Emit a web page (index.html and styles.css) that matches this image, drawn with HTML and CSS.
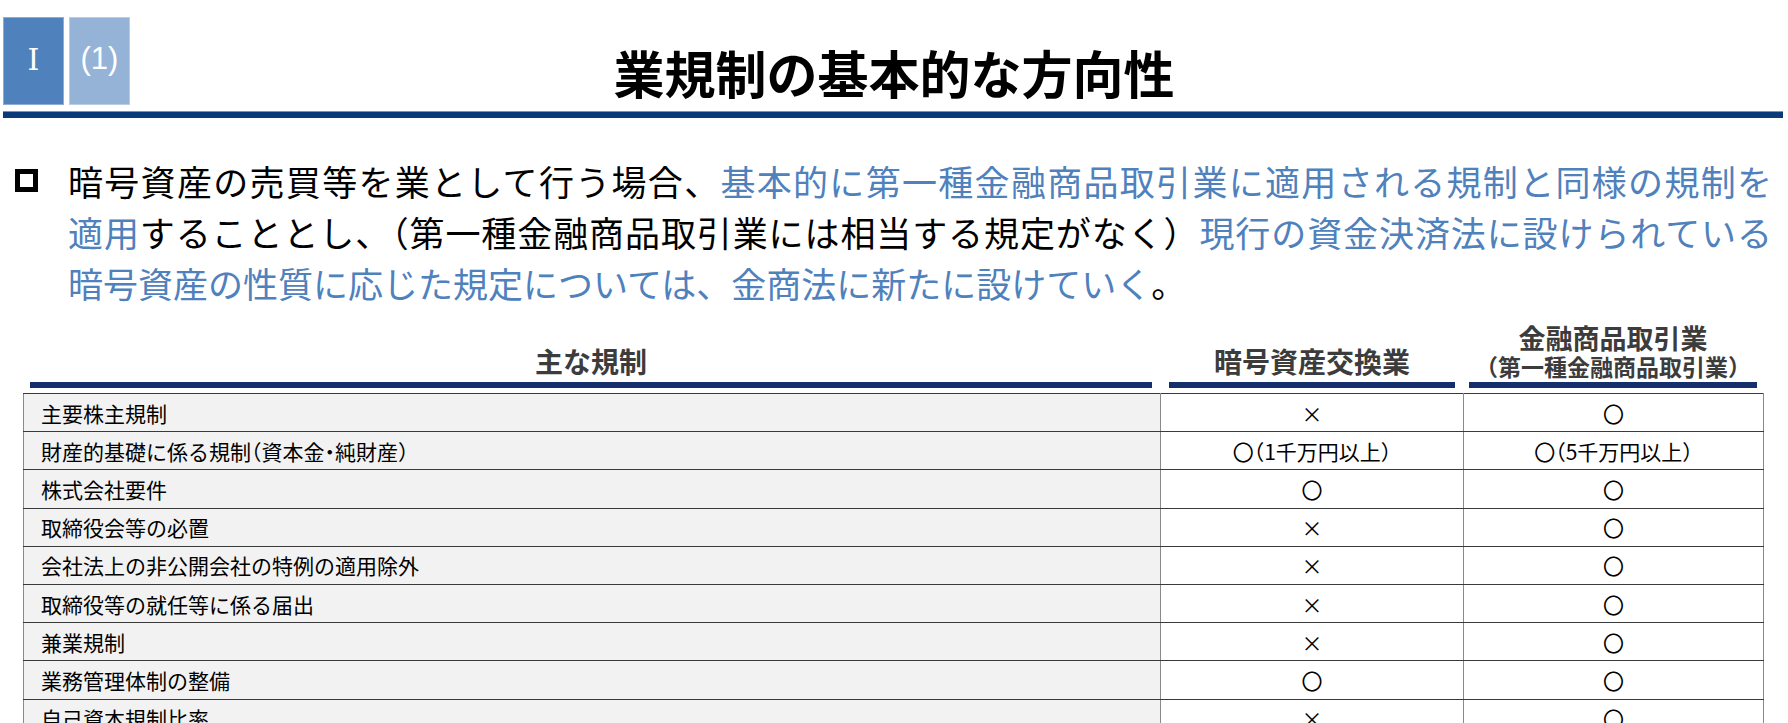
FILE: index.html
```html
<!DOCTYPE html>
<html lang="ja">
<head>
<meta charset="utf-8">
<title>業規制の基本的な方向性</title>
<link rel="stylesheet" href="styles.css">
</head>
<body>
<header class="top">
  <div class="badges">
    <div class="badge badge-main">Ⅰ</div>
    <div class="badge badge-sub">(1)</div>
  </div>
  <h1 class="title">業規制の基本的な方向性</h1>
  <div class="spacer"></div>
</header>
<div class="rule"></div>

<section class="lead">
  <span class="bullet"></span>
  <p class="lead-text">
    <span class="line fill">暗号資産の売買等を業として行う場合、<span class="hl">基本的に第一種金融商品取引業に適用される規制と同様の規制を</span></span>
    <span class="line fill"><span class="hl">適用</span>することとし、（第一種金融商品取引業には相当する規定がなく）<span class="hl">現行の資金決済法に設けられている</span></span>
    <span class="line"><span class="hl">暗号資産の性質に応じた規定については、金商法に新たに設けていく</span>。</span>
  </p>
</section>

<section class="compare">
  <div class="compare-head">
    <div class="head-cell head-main"><span class="head-text">主な規制</span></div>
    <div class="head-cell head-a"><span class="head-text">暗号資産交換業</span></div>
    <div class="head-cell head-b">
      <span class="head-text-top">金融商品取引業</span>
      <span class="head-text-sub">（第一種金融商品取引業）</span>
    </div>
  </div>
  <table class="grid">
    <colgroup>
      <col class="c-name">
      <col class="c-a">
      <col class="c-b">
    </colgroup>
    <tbody>
      <tr><td class="name">主要株主規制</td><td class="mark">×</td><td class="mark">〇</td></tr>
      <tr><td class="name">財産的基礎に係る規制（資本金・純財産）</td><td class="mark">〇（1千万円以上）</td><td class="mark">〇（5千万円以上）</td></tr>
      <tr><td class="name">株式会社要件</td><td class="mark">〇</td><td class="mark">〇</td></tr>
      <tr><td class="name">取締役会等の必置</td><td class="mark">×</td><td class="mark">〇</td></tr>
      <tr><td class="name">会社法上の非公開会社の特例の適用除外</td><td class="mark">×</td><td class="mark">〇</td></tr>
      <tr><td class="name">取締役等の就任等に係る届出</td><td class="mark">×</td><td class="mark">〇</td></tr>
      <tr><td class="name">兼業規制</td><td class="mark">×</td><td class="mark">〇</td></tr>
      <tr><td class="name">業務管理体制の整備</td><td class="mark">〇</td><td class="mark">〇</td></tr>
      <tr><td class="name">自己資本規制比率</td><td class="mark">×</td><td class="mark">〇</td></tr>
    </tbody>
  </table>
</section>
</body>
</html>
```

FILE: styles.css
```css
html, body {
  margin: 0;
  padding: 0;
  background: #ffffff;
}

body {
  font-family: "Noto Sans CJK JP", "Noto Sans", sans-serif;
  color: #000;
  width: 1788px;
  overflow: hidden;
}

/* ---------- header ---------- */
.top {
  display: grid;
  grid-template-columns: 1fr auto 1fr;
  align-items: end;
  padding-top: 17px;
}

.badges {
  display: flex;
  gap: 5px;
  margin-left: 3px;
  align-self: start;
}

.badge {
  width: 61px;
  height: 88px;
  display: flex;
  align-items: center;
  justify-content: center;
  color: #ffffff;
  box-sizing: border-box;
  border: 1px solid rgba(255, 255, 255, 0.35);
}

.badge-main {
  background: #4f81bd;
  font-family: "DejaVu Serif", "Liberation Serif", serif;
  font-size: 30px;
  padding-bottom: 4px;
}

.badge-sub {
  background: #95b3d7;
  font-family: "Liberation Sans", sans-serif;
  font-size: 31px;
  padding-bottom: 4px;
}

.title {
  margin: 0 0 3px 0;
  font-size: 51px;
  line-height: 60px;
  font-weight: 700;
  letter-spacing: 0;
  white-space: nowrap;
}

.rule {
  margin: 6px 5px 0 3px;
  height: 6px;
  background: #0a3a7a;
  border-top: 1px solid #6f95c8;
}

/* ---------- lead paragraph ---------- */
.lead {
  display: flex;
  align-items: flex-start;
  gap: 30px;
  padding: 0 16px 0 15px;
  margin-top: 37px;
}

.bullet {
  flex: 0 0 auto;
  width: 23px;
  height: 23px;
  box-sizing: border-box;
  border: 5px solid #000;
  background: #fff;
  margin-top: 14px;
}

.lead-text {
  flex: 1 1 auto;
  margin: 0;
  font-size: 35px;
  line-height: 51px;
  color: #000;
}

.line {
  display: block;
  white-space: nowrap;
}

.line.fill {
  text-align: justify;
  text-align-last: justify;
  white-space: normal;
}

.hl {
  color: #4f81bd;
}

/* ---------- comparison table ---------- */
.compare {
  margin: 15px 0 0 23px;
  width: 1740px;
}

.compare-head {
  display: grid;
  grid-template-columns: 1137px 303px 300px;
  align-items: stretch;
}

.head-cell {
  display: flex;
  flex-direction: column;
  justify-content: flex-end;
  align-items: center;
  border-bottom: 6px solid #13306c;
  color: #3c3c3c;
  font-weight: 700;
}

.head-main {
  margin: 0 8px 0 7px;
  padding-bottom: 4px;
}

.head-a {
  margin: 0 8px 0 9px;
  padding-bottom: 4px;
}

.head-b {
  margin: 0 6px;
  padding-bottom: 2px;
}

.head-text {
  font-size: 28px;
  line-height: 34px;
}

.head-text-top {
  font-size: 27px;
  line-height: 30px;
}

.head-text-sub {
  font-size: 23px;
  line-height: 27px;
}

.grid {
  margin-top: 5px;
  width: 1740px;
  border-collapse: collapse;
  table-layout: fixed;
  font-size: 21px;
}

.c-name { width: 1137px; }
.c-a { width: 303px; }
.c-b { width: 300px; }

.grid tr {
  height: 38.2px;
}

.grid td {
  border-top: 1px solid #3a3a3a;
  border-bottom: 1px solid #3a3a3a;
  border-left: 1px solid #8a8a8a;
  border-right: 1px solid #8a8a8a;
  padding: 0;
  line-height: 28px;
  white-space: nowrap;
  font-feature-settings: "halt";
}

.grid td.name {
  background: #f2f2f2;
  padding-left: 17px;
  text-align: left;
}

.grid td.mark {
  background: #ffffff;
  text-align: center;
}
```
